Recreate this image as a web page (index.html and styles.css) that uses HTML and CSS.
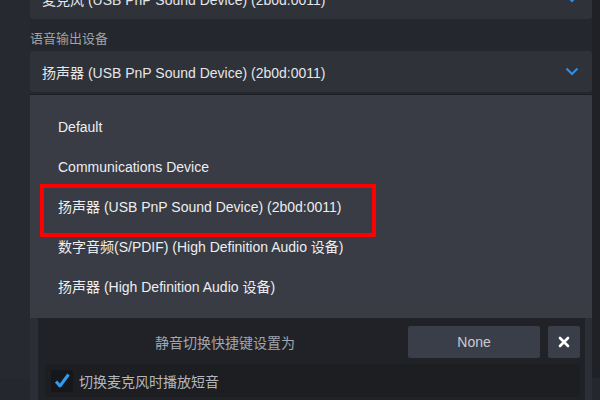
FILE: index.html
```html
<!DOCTYPE html>
<html lang="zh-CN">
<head>
<meta charset="utf-8">
<title>语音输出设备</title>
<link rel="stylesheet" href="styles.css">
</head>
<body>
<div class="page">
  <div class="select select-top">
    <span class="select-text">麦克风 (USB PnP Sound Device) (2b0d:0011)</span>
    <svg class="chev" width="14" height="9" viewBox="0 0 14 9"><path d="M1.5 1.5 L7 7 L12.5 1.5" fill="none" stroke="#2f8fe8" stroke-width="2"/></svg>
  </div>
  <div class="label">语音输出设备</div>
  <div class="select">
    <span class="select-text">扬声器 (USB PnP Sound Device) (2b0d:0011)</span>
    <svg class="chev" width="14" height="9" viewBox="0 0 14 9"><path d="M1.5 1.5 L7 7 L12.5 1.5" fill="none" stroke="#2f8fe8" stroke-width="2"/></svg>
  </div>
  <div class="dropdown">
    <div class="item">Default</div>
    <div class="item">Communications Device</div>
    <div class="item selected">扬声器 (USB PnP Sound Device) (2b0d:0011)<span class="mark"></span></div>
    <div class="item">数字音频(S/PDIF) (High Definition Audio 设备)</div>
    <div class="item">扬声器 (High Definition Audio 设备)</div>
  </div>
  <div class="panel">
    <div class="panel-inner">
      <div class="hotkey-row">
        <div class="hotkey-label">静音切换快捷键设置为</div>
        <div class="btn btn-none">None</div>
        <div class="btn btn-x">
          <svg width="12" height="12" viewBox="0 0 12 12"><path d="M2 2 L10 10 M10 2 L2 10" stroke="#ffffff" stroke-width="2.6" stroke-linecap="round"/></svg>
        </div>
      </div>
      <div class="check-row">
        <span class="checkbox">
          <svg width="18" height="18" viewBox="0 0 18 18"><path d="M3 9.5 L7 14 L15.5 2.5" fill="none" stroke="#2d9cf0" stroke-width="3" stroke-linejoin="round"/></svg>
        </span>
        <span class="check-text">切换麦克风时播放短音</span>
      </div>
    </div>
  </div>
</div>
</body>
</html>
```
FILE: styles.css
```css
html, body {
  margin: 0;
  padding: 0;
  width: 600px;
  height: 400px;
  overflow: hidden;
  background: #24272d;
  font-family: "Liberation Sans", Arial, "Noto Sans CJK SC", sans-serif;
}

.page {
  padding: 0 8px 0 30px;
  background: linear-gradient(to right, #26292f 0, #26292f 30px, #24272d 30px, #24272d 592px, #1f2126 592px);
  height: 400px;
}

.select {
  height: 41px;
  background: #2f3239;
  border-radius: 3px;
  display: flex;
  align-items: center;
  padding: 0 13px 0 12px;
  color: #e4e6ea;
  font-size: 14px;
}

.select-top {
  margin-top: -22px;
}

.select-text {
  flex: 1;
}

.chev {
  display: block;
}

.label {
  height: 18px;
  margin-top: 10px;
  margin-bottom: 4px;
  line-height: 18px;
  font-size: 13px;
  color: #9ea2a9;
  font-family: "Noto Sans CJK SC", sans-serif;
}

.dropdown {
  margin-top: 2px;
  border-top: 1px solid #1e2025;
  background: #393c44;
  padding: 12px 0 11px 0;
}

.item {
  height: 40px;
  line-height: 40px;
  padding-left: 28px;
  font-size: 14px;
  color: #eceef1;
  position: relative;
}

.selected .mark {
  position: absolute;
  left: 10px;
  top: -3px;
  width: 328px;
  height: 45px;
  border: 4px solid #ff0000;
}

.panel {
  background: #2b2e34;
  padding-left: 8px;
  height: 82px;
}

.panel-inner {
  background: #202227;
  height: 82px;
  margin-right: 7px;
  padding: 8px 5px 0 7px;
  box-sizing: border-box;
}

.hotkey-row {
  display: flex;
  align-items: center;
  gap: 8px;
  height: 32px;
}

.hotkey-label {
  width: 250px;
  text-align: right;
  font-size: 14px;
  color: #a2a6ad;
  font-family: "Noto Sans CJK SC", sans-serif;
  margin-right: auto;
}

.btn {
  height: 32px;
  background: #3a3e48;
  border-radius: 2px;
  display: flex;
  align-items: center;
  justify-content: center;
  color: #c9ccd2;
  font-size: 14px;
}

.btn-none {
  width: 132px;
}

.btn-x {
  width: 32px;
}

.check-row {
  margin-top: 6px;
  height: 33px;
  background: #1c1e22;
  border-radius: 3px;
  display: flex;
  align-items: center;
  padding-left: 6px;
  gap: 6px;
}

.checkbox {
  width: 22px;
  height: 22px;
  background: #15171b;
  border-radius: 2px;
  display: flex;
  align-items: center;
  justify-content: center;
}

.check-text {
  font-size: 14px;
  color: #b4b8be;
  font-family: "Noto Sans CJK SC", sans-serif;
}
```
